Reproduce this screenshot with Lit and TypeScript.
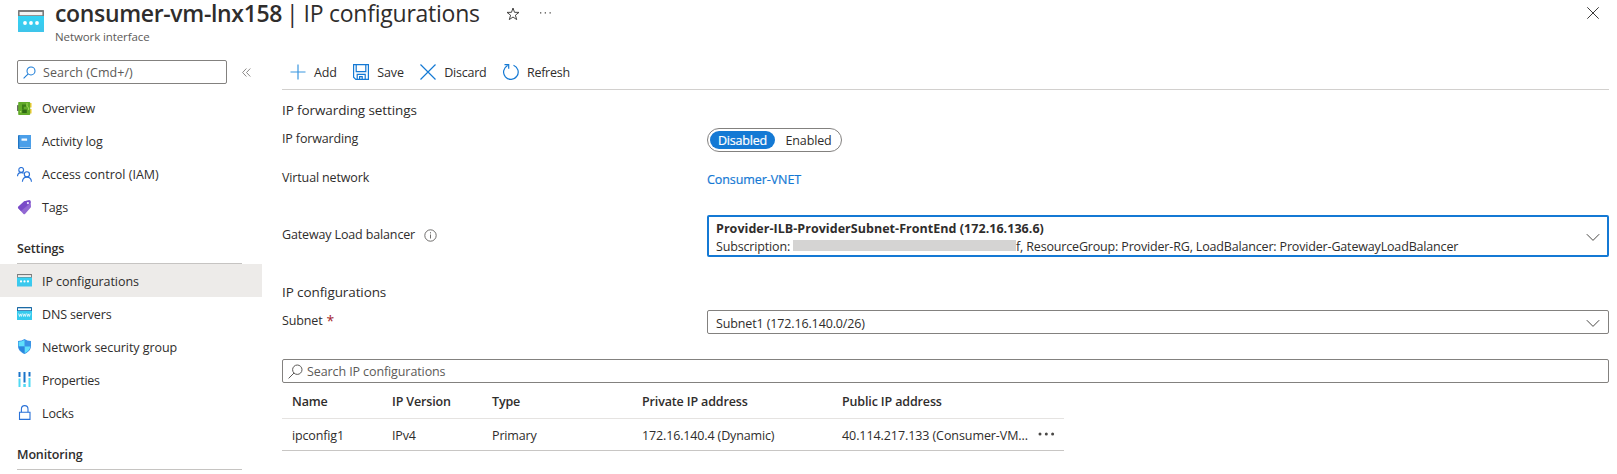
import { LitElement, html, css, svg, nothing } from "lit";
import { customElement, property } from "lit/decorators.js";

const chevron = html`<svg class="chev" width="14" height="9" viewBox="0 0 14 9"><path d="M.8 1.2 7 7.4l6.2-6.2" fill="none" stroke="#4a4846" stroke-width="1"/></svg>`;

const ipTile = (w: number, h: number) => html`<svg width=${w} height=${h} viewBox="0 0 26 22" preserveAspectRatio="none">
  <defs><linearGradient id="g" x2="0" y2="1"><stop offset="0" stop-color="#32d4f5"/><stop offset="1" stop-color="#3fc4ea"/></linearGradient></defs>
  <rect y="5" width="26" height="17" rx=".6" fill="url(#g)"/><path d="M0 .6Q0 0 .6 0h24.8q.6 0 .6.6V6H0z" fill="#7a7a7a"/><rect x="1.6" y="2" width="22.8" height="3.2" fill="#f4f4f4"/>
  <circle cx="7" cy="13" r="1.9" fill="#fff"/><circle cx="13" cy="13" r="1.9" fill="#fff"/><circle cx="19" cy="13" r="1.9" fill="#fff"/></svg>`;

const box = (content: unknown) => html`<svg width="15" height="15" viewBox="0 0 15 15">${content}</svg>`;

const icons: Record<string, unknown> = {
  overview: box(svg`<rect x="0" y="4" width="2" height="6" rx=".6" fill="#6b6b6b"/><rect x="12" y="2" width="2.6" height="4.6" rx=".5" fill="#f5cf3c"/><rect x="12" y="8" width="2.6" height="4.6" rx=".5" fill="#f5cf3c"/>
    <rect x="1.2" y="1" width="12" height="13" rx=".7" fill="#62ab2a"/><path d="M5 3.5h4v2.2H6.8v2.6H5z" fill="#3c7d17"/><path d="M5.2 8.5h4.6V12H5.2z" fill="#2f6a13"/><path d="M10 2v3.4l1.6 1.4V9" fill="none" stroke="#a5dc5b" stroke-width=".9"/><circle cx="3.6" cy="10.8" r=".8" fill="#b7e36e"/>`),
  log: box(svg`<rect x="1" y="1" width="13" height="14" rx="1" fill="#1f75c4"/><rect x="2.3" y="1" width="11.7" height="12.6" rx=".8" fill="#4b9fe9"/><path d="M2.500 13.300h11v.7h-11z" fill="#cfe6fa"/><rect x="4.500" y="4.500" width="5.600" height="2.200" rx=".3" fill="#f3f9ff"/>`),
  iam: box(svg`<g fill="none" stroke="#2a72d8" stroke-width="1.15"><circle cx="4.2" cy="2.9" r="2.4"/><path d="M.5 9.2C.6 6.9 2 5.6 4.3 5.6c1 0 1.8.2 2.4.7"/><circle cx="9.9" cy="7.3" r="2.6"/><path d="M5.4 14.8c.2-3 1.9-4.7 4.5-4.7s4.3 1.700 4.600 4.700"/></g>`),
  tags: box(svg`<path d="M7.2 1.200 12 .2q1.500-.2 1.600 1.300l.4 5.100q0 .7-.5 1.200L8 13.900q-.8.700-1.500 0L1.200 8.300q-.6-.8 0-1.500z" fill="#9268d3"/><path d="M7.200 1.200 12 .2q1.500-.2 1.600 1.300l.1 1.200L4 10.900 1.200 8.300q-.6-.8 0-1.500z" fill="#7040c4" opacity=".75"/><circle cx="10.900" cy="3.100" r="1.100" fill="#f3ebff"/>`),
  ip: ipTile(15, 12.5),
  dns: html`<svg width="15" height="13" viewBox="0 0 15 13"><rect y="3" width="15" height="10" rx=".5" fill="#35cbee"/><rect width="15" height="4" rx=".5" fill="#1b6aa5"/><rect x="1" y="1.300" width="13" height="1.900" fill="#fff"/><path d="m1.600 6.500.9 3 .9-2.600.9 2.600.8-3m.7 0 .8 3 .9-2.600.9 2.600.8-3m.700 0 .8 3 .9-2.600.8 2.600.9-3" fill="none" stroke="#fff" stroke-width=".7"/></svg>`,
  nsg: box(svg`<path d="M7.500 0Q10 1.800 14 2v5c0 4-3.200 6.500-6.500 8C4.200 13.500 1 11 1 7V2Q5 1.800 7.500 0z" fill="#3a94e6"/><path d="M7.500 1Q5 2.600 1.700 2.700V7.500h5.800zM7.500 7.500h5.800C13 10.800 10.500 12.800 7.500 14.200z" fill="#5fe0fb"/><path d="M7.500 7.500v6.700C4.500 12.800 2 10.800 1.700 7.500z" fill="#2b86dd"/>`),
  props: box(svg`<path d="M1.500 0h2v5h-2zM6.500 0h2v10.500h-2zM11.500 0h2v4.500h-2z" fill="#1b74c9"/><path d="M1.500 6.500h2V15h-2zM6.300 12h2.500v3H6.300zM11.500 6h2v9h-2z" fill="#50daf4"/>`),
  locks: box(svg`<g fill="none" stroke="#2a72d8" stroke-width="1.100"><path d="M2.500 7.300h10.500v7.100H2.500z"/><path d="M4.400 7.200V4.200a3.300 3.600 0 0 1 6.600 0v3"/></g>`),
};

@customElement("side-nav")
class SideNav extends LitElement {
  static styles = css`
    :host { display: block; width: 262px; flex: none; letter-spacing: -0.14px; }
    .find { display: flex; align-items: center; margin-left: 17px; margin-bottom: 8px; }
    .input { box-sizing: border-box; width: 210px; height: 24px; border: 1px solid #83817f; border-radius: 2px; display: flex; align-items: center; padding-left: 5px; gap: 7px; color: #5c5a58; letter-spacing: 0.06px; }
    .input span { padding-top: 2px; }
    .collapse { margin-left: 15px; }
    .item { display: flex; align-items: center; height: 33px; padding-left: 17px; }
    .item svg { display: block; }
    .low .text { padding-top: 2px; }
    .ico { width: 15px; margin-right: 10px; flex: none; }
    .on { background: #edebe9; }
    .a { letter-spacing: 0; }
    .n { letter-spacing: -0.07px; }
    .p { letter-spacing: -0.28px; }
    .head { box-sizing: border-box; height: 40px; margin: 0 20px 0 17px; padding-top: 16px; line-height: 18px; font-weight: 600; border-bottom: 1px solid #c6c4c2; }
    .late { height: 41px; padding-top: 17px; }
  `;
  item(icon: string, label: string, cls = "") {
    return html`<div class="item ${cls}"><span class="ico">${icons[icon]}</span><span class="text">${label}</span></div>`;
  }
  render() {
    return html`
      <div class="find">
        <div class="input"><svg width="13" height="13" viewBox="0 0 13 13"><g fill="none" stroke="#1a7bd6" stroke-width="1.050"><circle cx="8" cy="4.900" r="4"/><path d="M5.200 7.800.6 12.400"/></g></svg><span>Search (Cmd+/)</span></div>
        <svg class="collapse" width="9" height="9" viewBox="0 0 9 9"><path d="M4.400.5.600 4.500l3.800 4M8.300.5 4.500 4.500l3.800 4" fill="none" stroke="#6d6b69" stroke-width=".8"/></svg>
      </div>
      ${this.item("overview", "Overview")}
      ${this.item("log", "Activity log")}
      ${this.item("iam", "Access control (IAM)", "a")}
      ${this.item("tags", "Tags")}
      <div class="head">Settings</div>
      ${this.item("ip", "IP configurations", "low on n")}
      ${this.item("dns", "DNS servers", "low")}
      ${this.item("nsg", "Network security group", "low n")}
      ${this.item("props", "Properties", "low p")}
      ${this.item("locks", "Locks", "low")}
      <div class="head late">Monitoring</div>`;
  }
}

@customElement("form-row")
class FormRow extends LitElement {
  @property() label = "";
  @property({ type: Boolean }) info = false;
  @property({ type: Boolean }) required = false;
  static styles = css`
    :host { display: grid; grid-template-columns: 425px 1fr; align-items: start; box-sizing: border-box; }
    .label { display: flex; align-items: center; height: 22px; padding-top: var(--label-top, 0px); letter-spacing: -0.14px; }
    .star { color: #a4262c; margin-left: 4px; font-size: 14px; }
    svg { margin-left: 9px; }
  `;
  render() {
    return html`<div class="label">${this.label}${this.required ? html`<span class="star">*</span>` : nothing}${this.info
      ? html`<svg width="13" height="13" viewBox="0 0 13 13"><circle cx="6.500" cy="6.500" r="5.700" fill="none" stroke="#605e5c" stroke-width=".9"/><path d="M6.500 5.500v4M6.500 3.200v1.200" stroke="#605e5c" stroke-width=".9"/></svg>` : nothing}</div>
      <slot></slot>`;
  }
}

@customElement("app-root")
class AppRoot extends LitElement {
  static styles = css`
    :host { display: block; height: 474px; overflow: hidden; background: #fff; color: #2f2d2c; font: 12.5px/18px "Open Sans", "Noto Sans", sans-serif; white-space: nowrap; letter-spacing: -0.14px; }
    svg { display: block; flex: none; }
    header { display: flex; height: 60px; padding-left: 18px; }
    .tile { margin-top: 10px; width: 26px; margin-right: 11px; }
    h1 { margin: 0; font-size: 23px; line-height: 26px; font-weight: 400; letter-spacing: -0.24px; display: flex; }
    h1 b { font-weight: 600; letter-spacing: -0.34px; }
    .bar { margin: 0 5px 0 4px; }
    .kind { font-size: 11.500px; line-height: 16px; padding-top: 3px; color: #5c5a58; letter-spacing: -0.1px; }
    .star { margin: 7px 0 0 26px; }
    .more { margin: 12px 0 0 19px; }
    .close { margin: 7px 18px 0 auto; }
    .body { display: flex; }
    main { flex: 1; margin: -2px 8px 0 20px; }
    .tools { box-sizing: border-box; height: 32px; display: flex; align-items: center; border-bottom: 1px solid #d2d0ce; padding-left: 8px; }
    .tool { display: flex; align-items: center; gap: 8px; margin-right: 16.500px; margin-top: -2px; }
    .tool svg { margin-top: -2px; }
    .tight { letter-spacing: -0.25px; }
    h2 { margin: 0; font-size: 13.500px; font-weight: 400; line-height: 20px; letter-spacing: -0.1px; }
    .h-fwd { padding: 10px 0 2px; }
    .h-cfg { padding: 10px 0 8px; }
    .r1 { height: 36px; padding-top: 6px; }
    .r2 { height: 42px; padding-top: 9px; }
    .r3 { height: 72px; padding-top: 15px; --label-top: 9px; }
    .toggle { box-sizing: border-box; width: 135px; height: 24px; border: 1px solid #83817f; border-radius: 12px; display: flex; align-items: center; padding-left: 2px; }
    .toggle span { height: 18px; line-height: 20px; }
    .pill { width: 65px; text-align: center; border-radius: 9px; background: #1479d4; color: #fff; margin-right: 10.500px; letter-spacing: -0.18px; -webkit-text-stroke: 0.2px #fff; }
    .link { color: #1479d4; line-height: 26px; letter-spacing: -0.080px; -webkit-text-stroke: 0.2px #1479d4; }
    .select { box-sizing: border-box; height: 24px; border: 1px solid #83817f; border-radius: 2px; display: flex; align-items: center; justify-content: space-between; padding: 3px 8px 0 8px; }
    .focus { height: 42px; border: 2px solid #1479d4; padding: 0 7px 0 7px; }
    .chev { margin-bottom: 1px; }
    .focus .chev { margin: 2px 0 0; }
    .name { font-weight: 700; letter-spacing: 0.04px; line-height: 19px; padding-top: 1px; }
    .sub { display: flex; align-items: center; line-height: 17px; letter-spacing: -0.165px; }
    .mask { width: 223px; height: 11px; background: #d5d4d3; margin: 0 0 2px 3px; }
    .s1 { letter-spacing: -0.13px; }
    .s0 { letter-spacing: -0.16px; }
    .search { box-sizing: border-box; height: 24px; margin-top: 25px; border: 1px solid #83817f; border-radius: 2px; display: flex; align-items: center; gap: 4px; padding: 1px 0 0 5px; color: #5c5a58; letter-spacing: -0.1px; }
    .search svg { margin-top: -1px; }
    .row { box-sizing: border-box; width: 782px; display: grid; grid-template-columns: 100px 100px 150px 200px 196px 1fr; padding-left: 10px; align-items: center; height: 32px; border-bottom: 1px solid #c8c6c4; padding-top: 2px; letter-spacing: -0.14px; }
    .top { height: 36px; font-weight: 600; border-bottom-color: #e5e3e1; }
    .pub { letter-spacing: -0.08px; }
    .dots { margin-top: -4px; }
  `;
  render() {
    return html`
      <header>
        <div class="tile">${ipTile(26, 22)}</div>
        <div>
          <h1><b>consumer-vm-lnx158</b><span class="bar">|</span><span>IP configurations</span></h1>
          <div class="kind">Network interface</div>
        </div>
        <svg class="star" width="14" height="14" viewBox="0 0 14 14"><path d="m7 1 1.500 4.300 4.500.1-3.600 2.800 1.300 4.400L7 10l-3.700 2.600 1.300-4.400L1 5.400l4.500-.1z" fill="none" stroke="#3b3a39" stroke-width=".95"/></svg>
        <svg class="more" width="13" height="3" viewBox="0 0 13 3"><path d="M1 .8h1.300M5.700.8H7M10.500.8h1.300" stroke="#4a4846" stroke-width="1.300"/></svg>
        <svg class="close" width="12" height="12" viewBox="0 0 12 12"><path d="m.3.3 11.400 11.400M11.700.3.3 11.700" stroke="#3b3a39" stroke-width="1"/></svg>
      </header>
      <div class="body">
        <side-nav></side-nav>
        <main>
          <div class="tools">
            <div class="tool"><svg width="16" height="16" viewBox="0 0 16 16"><path d="M8 .5v15M.5 8h15" stroke="#3b97e0" stroke-width="1.200"/></svg>Add</div>
            <div class="tool"><svg width="16" height="16" viewBox="0 0 16 16"><g fill="none" stroke="#1479d4" stroke-width="1.200"><path d="M.6.600h14.800v14.800H2.800L.6 13.200z"/><path d="M3.200.600v7h9.600v-7M4.200 15.400v-5h8v5M6.600 15v-2.400h2.600V15"/></g></svg>Save</div>
            <div class="tool tight"><svg width="16" height="16" viewBox="0 0 16 16"><path d="m.5.500 15 15M15.500.500l-15 15" stroke="#1479d4" stroke-width="1.200"/></svg>Discard</div>
            <div class="tool tight"><svg width="16" height="16" viewBox="0 0 16 16"><path d="M10.500 1.200A7.300 7.300 0 1 1 4.600 1.500M1.500.7h4.200v4" fill="none" stroke="#1479d4" stroke-width="1.200"/></svg>Refresh</div>
          </div>
          <h2 class="h-fwd">IP forwarding settings</h2>
          <form-row class="r1" label="IP forwarding"><div class="toggle"><span class="pill">Disabled</span><span>Enabled</span></div></form-row>
          <form-row class="r2" label="Virtual network"><span class="link">Consumer-VNET</span></form-row>
          <form-row class="r3" label="Gateway Load balancer" info>
            <div class="select focus">
              <div><div class="name">Provider-ILB-ProviderSubnet-FrontEnd (172.16.136.6)</div>
                <div class="sub"><span class="s0">Subscription:</span><span class="mask"></span><span>f, ResourceGroup: Provider-RG, LoadBalancer: Provider-GatewayLoadBalancer</span></div></div>
              ${chevron}
            </div>
          </form-row>
          <h2 class="h-cfg">IP configurations</h2>
          <form-row class="r4" label="Subnet" required><div class="select"><span class="s1">Subnet1 (172.16.140.0/26)</span>${chevron}</div></form-row>
          <div class="search"><svg width="15" height="15" viewBox="0 0 15 15"><g fill="none" stroke="#5c5a58" stroke-width="1"><circle cx="9.300" cy="5.700" r="4.700"/><path d="M6 9 .6 14.400"/></g></svg>Search IP configurations</div>
          <div class="row top"><span>Name</span><span>IP Version</span><span>Type</span><span>Private IP address</span><span>Public IP address</span></div>
          <div class="row"><span>ipconfig1</span><span>IPv4</span><span>Primary</span><span>172.16.140.4 (Dynamic)</span><span class="pub">40.114.217.133 (Consumer-VM...</span>
            <svg class="dots" width="17" height="4" viewBox="0 0 17 4"><g fill="#4a4846"><circle cx="2" cy="2" r="1.500"/><circle cx="8.300" cy="2" r="1.500"/><circle cx="14.600" cy="2" r="1.500"/></g></svg></div>
        </main>
      </div>`;
  }
}
